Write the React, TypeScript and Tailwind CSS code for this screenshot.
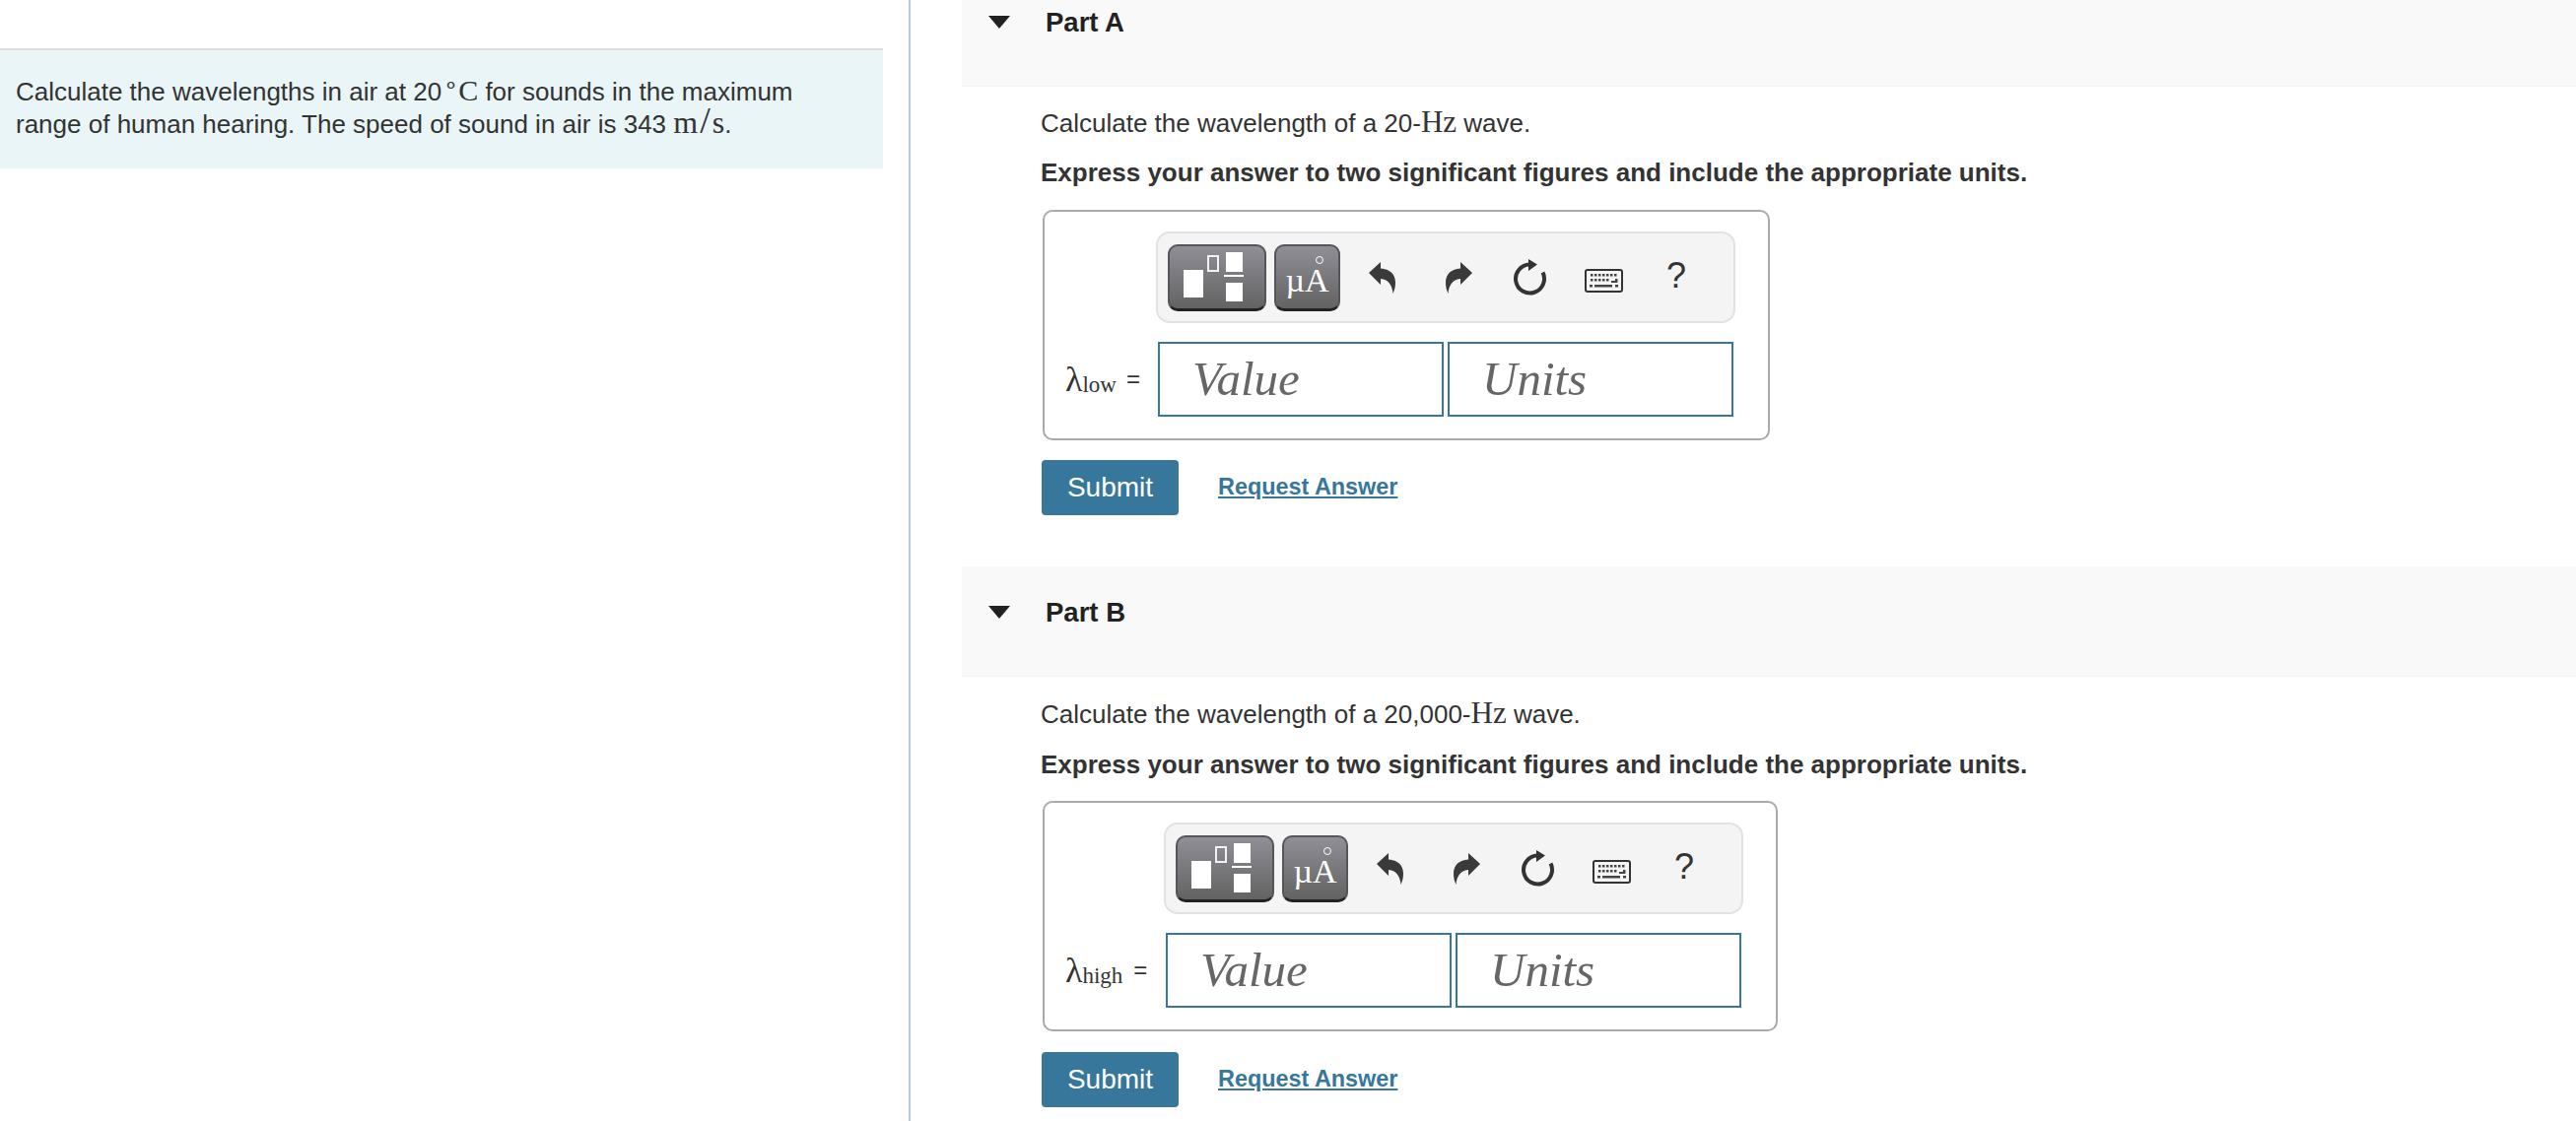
const sans = "font-['Liberation_Sans',Arial,sans-serif]";
const serif = "font-['Liberation_Serif','Times_New_Roman',serif]";

function Serif({ children }: { children: React.ReactNode }) {
  return <span className={`${serif} text-[31px] leading-[0]`}>{children}</span>;
}

function TemplateButton() {
  return (
    <div className="h-[68px] w-[100px] rounded-[10px] border-2 border-[#55555a] border-b-[3px] border-b-[#222] bg-gradient-to-b from-[#908f97] to-[#636363]">
      <svg width="96" height="63" viewBox="0 0 96 63" fill="#fff">
        <rect x="14" y="24" width="20" height="28" />
        <rect x="39" y="10" width="10" height="15" fill="none" stroke="#f2f2f2" strokeWidth="2" />
        <rect x="57" y="6" width="17" height="20" />
        <rect x="55" y="29" width="20" height="2" />
        <rect x="57" y="37" width="17" height="19" />
      </svg>
    </div>
  );
}

function UnitsButton() {
  return (
    <div className={`relative flex h-[68px] w-[67px] items-end justify-center rounded-[10px] border-2 border-[#55555a] border-b-[3px] border-b-[#222] bg-gradient-to-b from-[#908f97] to-[#636363] pb-[9px] ${serif} text-[34px] leading-[38px] text-white`}>
      <span>µ</span>
      <span>A</span>
      <span className="absolute right-[15px] top-[10px] h-[8px] w-[8px] rounded-full border border-white"></span>
    </div>
  );
}

function Undo({ flip = false }: { flip?: boolean }) {
  return (
    <svg width="28" height="32" viewBox="0 0 28 32" className={flip ? "-scale-x-100" : ""} fill="#3a3a3a">
      <path d="M0 11 L12 0 L12 6.5 C21 7 27 12 27 21 C27 25 26 29 24.5 32 C24 25 20.5 17.5 12 17 L12 23 Z" />
    </svg>
  );
}

function Reset() {
  return (
    <svg width="34" height="37" viewBox="0 0 34 37" fill="none">
      <path d="M16 5.5 A14.5 14.5 0 1 0 29.5 13.5" stroke="#333" strokeWidth="4" />
      <path d="M15 0 L24 5.5 L15 12 Z" fill="#333" />
    </svg>
  );
}

function Keyboard() {
  const top = [7, 11, 15, 19, 23, 27, 31];
  const mid = [7, 11, 15, 19, 23];
  return (
    <svg width="39" height="24" viewBox="0 0 39 24">
      <rect x="1" y="1" width="37" height="22" rx="2" fill="#f4f4f4" stroke="#333" strokeWidth="2" />
      {top.map((x) => (
        <rect key={x} x={x - 1} y="5" width="2.5" height="2.5" fill="#444" />
      ))}
      {mid.map((x) => (
        <rect key={x} x={x - 1} y="10" width="2.5" height="2.5" fill="#444" />
      ))}
      <path d="M31 10 H33.5 V14 H27 V12 H31 Z" fill="#444" />
      <rect x="5" y="16" width="3" height="2.5" fill="#444" />
      <rect x="10" y="16" width="18" height="2.5" fill="#444" />
      <rect x="31" y="16" width="3" height="2.5" fill="#444" />
    </svg>
  );
}

function Toolbar() {
  return (
    <div className="flex h-[93px] w-[588px] items-center rounded-[14px] border-2 border-[#e2e2e2] bg-[#f4f4f4] pl-[10px]">
      <div className="flex gap-[8px]">
        <TemplateButton />
        <UnitsButton />
      </div>
      <div className="ml-[29px]"><Undo /></div>
      <div className="ml-[49px]"><Undo flip /></div>
      <div className="ml-[42px]"><Reset /></div>
      <div className="ml-[38px] mt-[6px]"><Keyboard /></div>
      <div className={`ml-[44px] w-[18px] text-[36px] leading-[40px] text-[#333] ${sans} mb-[4px]`}>?</div>
    </div>
  );
}

function Field({ text }: { text: string }) {
  return (
    <div className={`flex h-[76px] w-[290px] items-center border-2 border-[#37779b] bg-white pl-[33px] ${serif} text-[49px] italic text-[#666]`}>
      {text}
    </div>
  );
}

function AnswerBox({ sub, labelWidth, eqGap }: { sub: string; labelWidth: string; eqGap: string }) {
  return (
    <div className="ml-[2px] inline-flex rounded-[10px] border-2 border-[#aaaaaa] pb-[22px] pl-[21px] pr-[33px] pt-[20px]">
      <div className={`flex ${labelWidth} items-end`}>
        <div className={`flex h-[76px] items-center whitespace-nowrap ${serif} text-[#333]`}>
          <span className="text-[36px] leading-none">λ</span>
          <span className="mt-[10px] text-[23px] leading-none">{sub}</span>
          <span className={`${eqGap} ${sans} text-[24px] leading-none`}>=</span>
        </div>
      </div>
      <div className="flex flex-col gap-[19px]">
        <div className="-ml-[2px]"><Toolbar /></div>
        <div className="flex gap-[4px]">
          <Field text="Value" />
          <Field text="Units" />
        </div>
      </div>
    </div>
  );
}

function Part({
  title,
  intro,
  sub,
  labelWidth,
  eqGap,
  roomy = false,
}: {
  title: string;
  intro: React.ReactNode;
  sub: string;
  labelWidth: string;
  eqGap: string;
  roomy?: boolean;
}) {
  return (
    <section>
      <div className="flex h-[112px] items-start border-b border-[#f3f3f3] bg-[#f9f9f9] pl-[27px] pt-[24px]">
        <div className="flex h-[46px] items-center gap-[36px]">
          <svg width="22" height="13" viewBox="0 0 22 13" className="-mt-[2px]">
            <path d="M0 0 H22 L11 13 Z" fill="#222" />
          </svg>
          <h2 className="text-[27.5px] font-bold text-[#222]">{title}</h2>
        </div>
      </div>
      <div className="pl-[80px]">
        <p className={`${roomy ? "mt-[22px]" : "mt-[21px]"} text-[26px] leading-[33px]`}>{intro}</p>
        <p className={`${roomy ? "mt-[18px]" : "mt-[17px]"} text-[26px] font-bold leading-[33px]`}>
          Express your answer to two significant figures and include the appropriate units.
        </p>
        <div className={`${roomy ? "mt-[20px]" : "mt-[21px]"} flex`}>
          <AnswerBox sub={sub} labelWidth={labelWidth} eqGap={eqGap} />
        </div>
        <div className={`ml-[1px] ${roomy ? "mt-[21px]" : "mt-[20px]"} flex items-center gap-[40px]`}>
          <button className="h-[56px] w-[139px] rounded-[4px] bg-[#37779b] text-[28px] text-white">Submit</button>
          <a className="text-[23.4px] font-bold text-[#37779b] underline">Request Answer</a>
        </div>
      </div>
    </section>
  );
}

export default function App() {
  return (
    <div className={`flex h-[1138px] w-[2614px] overflow-hidden bg-white text-[#333] ${sans}`}>
      <aside className="h-full w-[924px] shrink-0 border-r-2 border-[#b9cadb]">
        <div className="mt-[49px] h-[122px] w-[896px] border-t-2 border-[#dddddd] bg-[#e9f5f7] pl-[16px] pt-[26px] text-[26px] leading-[33px]">
          <p>
            Calculate the wavelengths in air at 20<sup className="ml-[2px] top-[-8px] text-[24px] leading-[0]">∘</sup>
            <span className={`${serif} text-[30px] leading-[0]`}>C</span> for sounds in the maximum
          </p>
          <p>
            range of human hearing. The speed of sound in air is 343{" "}
            <span className={`${serif} text-[32px] leading-[0]`}>
              m<span className="mx-[2px] text-[38px] font-light leading-[0]">/</span>s
            </span>.
          </p>
        </div>
      </aside>
      <main className="-mt-[24px] flex-1 pl-[52px]">
        <Part
          title="Part A"
          sub="low"
          labelWidth="w-[94px]"
          eqGap="ml-[10px]"
          intro={<>Calculate the wavelength of a 20-<Serif>Hz</Serif> wave.</>}
        />
        <div className="h-[52px]"></div>
        <Part
          title="Part B"
          sub="high"
          labelWidth="w-[102px]"
          eqGap="ml-[11px]"
          roomy
          intro={<>Calculate the wavelength of a 20,000-<Serif>Hz</Serif> wave.</>}
        />
      </main>
    </div>
  );
}
